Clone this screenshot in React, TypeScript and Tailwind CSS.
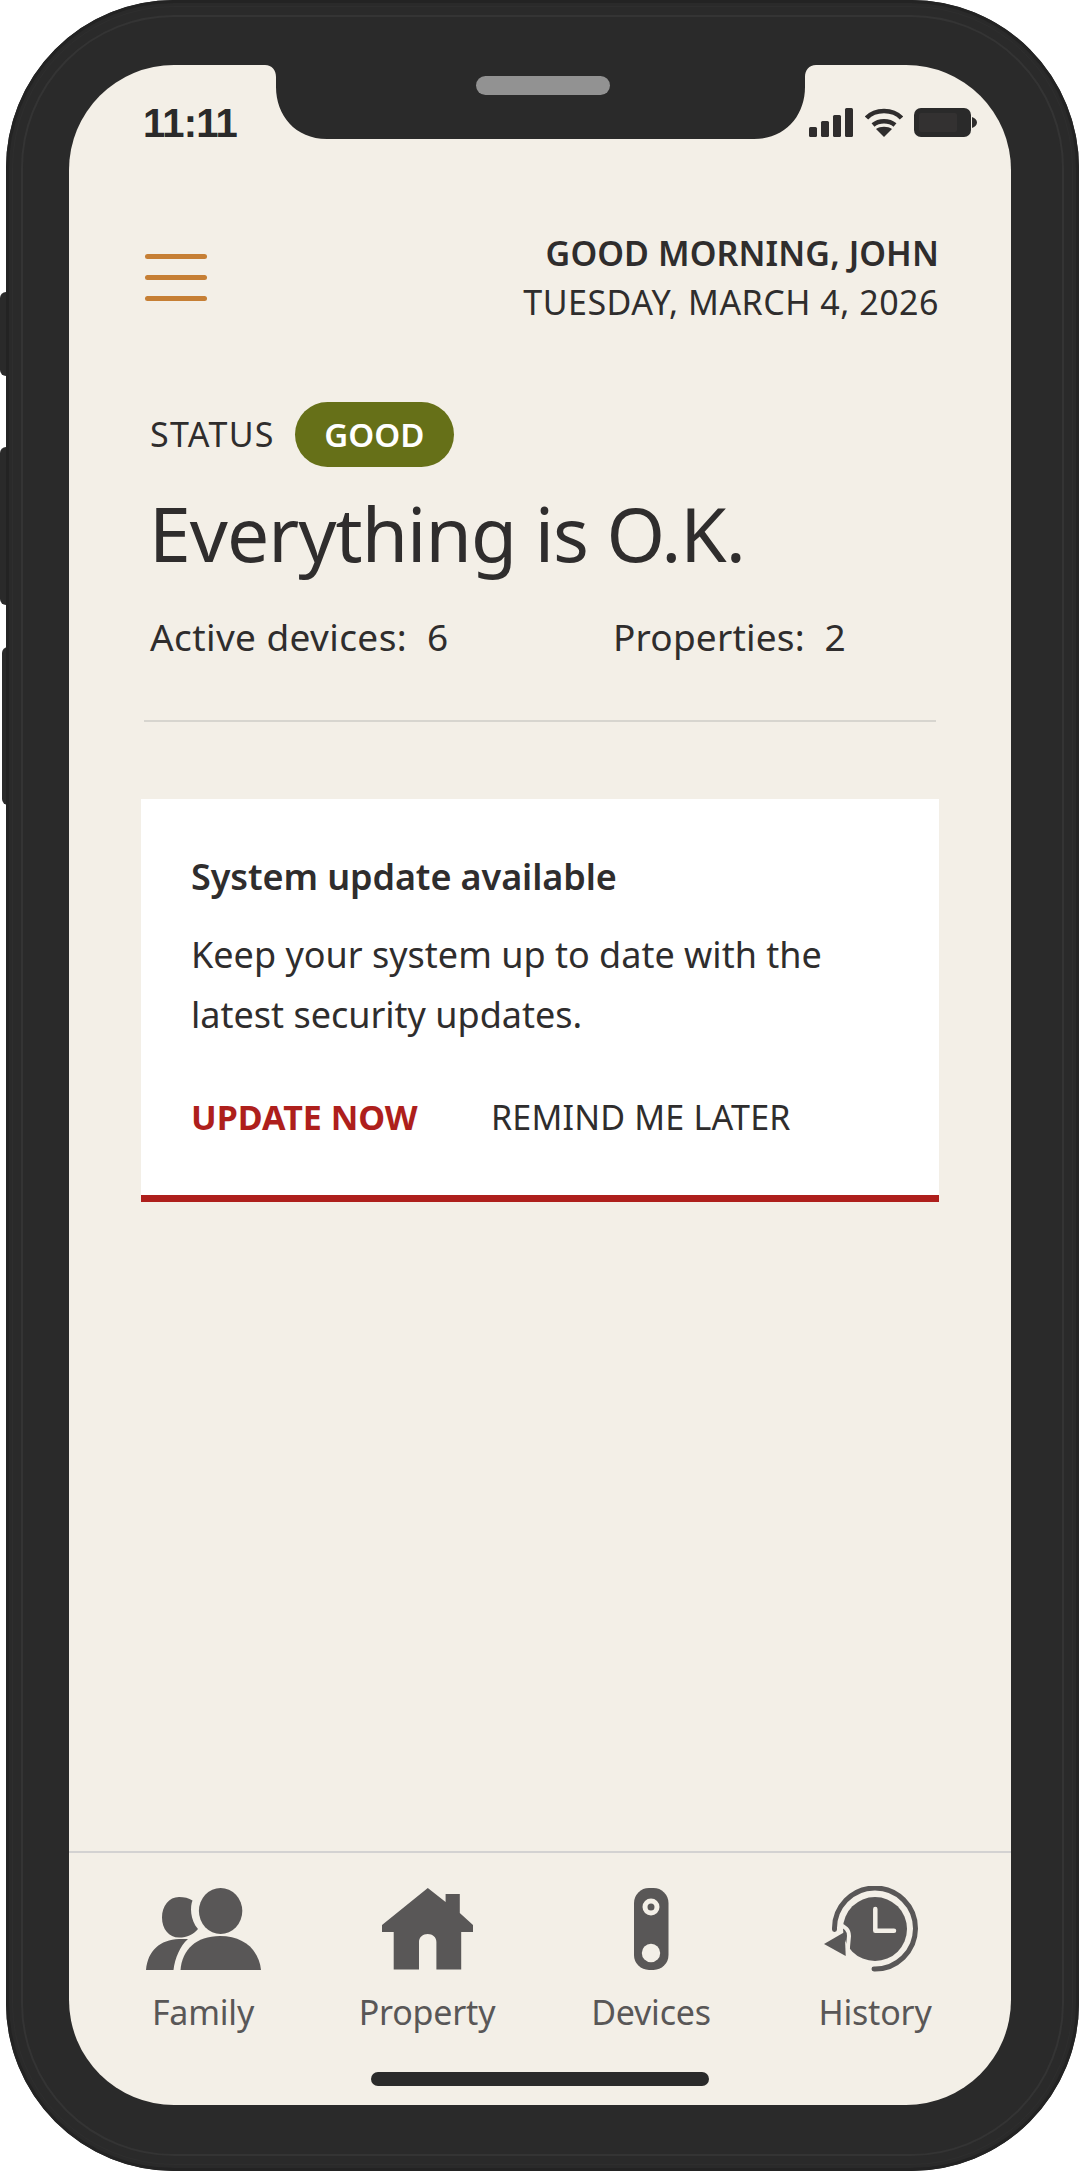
const font = "font-['Noto_Sans',sans-serif]";

function Family() {
  return (
    <svg width="115" height="82" viewBox="0 0 115 82" fill="#595757">
      <ellipse cx="74.600" cy="23" rx="21.700" ry="23" />
      <path d="M33 9C38 9 43 10 46.500 12.500C44 18 44 32 52 41C48 46 41 49.600 33 49.600C23 49.600 16 41 16 29.500C16 18 23 9 33 9Z" />
      <path d="M0 82C2 62 14 52 33 51H42C34 58 29 70 27.500 82Z" />
      <path d="M34.500 82C36 62 50 48 74 48C98 48 113 62 115 82Z" />
    </svg>
  );
}
function House() {
  return (
    <svg width="91" height="82" viewBox="0 0 91 82" fill="#595757">
      <path d="M45.800 0 63.600 14V6H77.800V25L91 37V44H79.200V81.500H54.400V54C54.400 49 50.500 46 45.700 46S37 49 37 54V81.500H11.700V44H0V37Z" />
    </svg>
  );
}
function Device() {
  return (
    <svg width="35" height="82" viewBox="0 0 35 82">
      <rect width="34.500" height="82" rx="15" fill="#595757" />
      <circle cx="17" cy="19" r="6" fill="none" stroke="#f3efe7" strokeWidth="5" />
      <circle cx="17" cy="65" r="9.200" fill="#f3efe7" />
    </svg>
  );
}
function HistoryIcon() {
  return (
    <svg width="108" height="86" viewBox="0 0 108 86" fill="none">
      <circle cx="54" cy="43" r="32" fill="#595757" />
      <path d="M53 83A40.500 40.500 0 1 0 13.500 43.500" stroke="#595757" strokeWidth="5" strokeLinecap="round" />
      <path d="M18 39C24 40 28 44 28 50L26 72" stroke="#f3efe7" strokeWidth="4" />
      <path d="M3 58 23.700 46 24.700 70Z" fill="#595757" />
      <path d="M54.300 23V44.700H73" stroke="#f3efe7" strokeWidth="4.500" strokeLinecap="round" strokeLinejoin="round" />
    </svg>
  );
}

function Tab({ icon, label }: { icon: React.ReactNode; label: string }) {
  return (
    <div className="flex w-[224px] flex-col items-center">
      <div className="flex h-[86px] items-center">{icon}</div>
      <span className="mt-[17px] text-[34px] leading-[46px] tracking-[-0.2px] text-[#595757]">{label}</span>
    </div>
  );
}

export default function App() {
  return (
    <div className={`relative h-[2171px] w-[1080px] overflow-hidden bg-white ${font}`}>
      <div className="absolute left-0 top-[292px] h-[84px] w-[12px] rounded-l-[6px] bg-[#2a2a2a]" />
      <div className="absolute left-0 top-[447px] h-[158px] w-[12px] rounded-l-[6px] bg-[#2a2a2a]" />
      <div className="absolute left-[2px] top-[647px] h-[158px] w-[12px] rounded-l-[6px] bg-[#2a2a2a]" />

      <div className="relative ml-[6px] h-[2171px] w-[1073px] rounded-[168px] bg-[#2a2a2a] pl-[63px] pr-[68px] pt-[65px]">
        <div className="pointer-events-none absolute inset-[15px] rounded-[153px] border-[2px] border-[#343434]" />
        <div className="pointer-events-none absolute inset-[6px] rounded-[162px] border border-[#2e2e2e]" />
        <div className="pointer-events-none absolute inset-0 rounded-[168px] border-[3px] border-[#232323]" />

        <div className="relative flex h-[2040px] flex-col overflow-hidden rounded-[105px] bg-[#f3efe7] text-[#2f2d2d]">
          <svg className="absolute left-[196px] top-0" width="551" height="74" viewBox="0 0 551 74" fill="#2a2a2a">
            <path d="M0 0H551C544 0 540 5 540 12V22C540 50 521 74 489 74H62C30 74 11 50 11 22V12C11 5 7 0 0 0Z" />
          </svg>
          <div className="absolute left-[407px] top-[11px] h-[19px] w-[134px] rounded-full bg-[#929292]" />

          <div className="flex h-[74px] shrink-0 items-end justify-between pl-[74px] pr-[34px]">
            <span className="font-['Liberation_Sans',sans-serif] text-[40px] font-bold leading-[32px] tracking-[-0.8px] text-[#2a2a2a]">11:11</span>
            <div className="flex items-center gap-[11.500px] pb-[2px]">
              <svg width="44" height="29" viewBox="0 0 44 29" fill="#2f2d2d">
                <rect x="0" y="19" width="8" height="10" rx="1.500" />
                <rect x="12" y="13" width="8" height="16" rx="1.500" />
                <rect x="24" y="7" width="8" height="22" rx="1.500" />
                <rect x="36" y="0" width="8" height="29" rx="1.500" />
              </svg>
              <svg width="38" height="29" viewBox="0 0 38 29" fill="none" stroke="#2f2d2d" strokeWidth="4.500">
                <path d="M1.500 10C10 .5 28 .5 36.500 10" />
                <path d="M8 17C14 12 24 12 30 17" />
                <path d="M19 29 11 21C15 18 23 18 27 21Z" fill="#2f2d2d" stroke="none" />
              </svg>
              <svg width="63" height="29" viewBox="0 0 63 29">
                <rect width="57" height="29" rx="7" fill="#2a2a2a" />
                <rect x="5" y="5" width="38" height="19" rx="2" fill="#333131" />
                <path d="M58 9C61 10 63 12 63 14.500S61 19 58 20Z" fill="#2f2d2d" />
              </svg>
            </div>
          </div>

          <div className="mt-[90px] flex items-start justify-between pl-[76px] pr-[72px]">
            <div className="mt-[25px] flex w-[62px] flex-col gap-[16px]">
              <div className="h-[5px] rounded-full bg-[#c67f35]" />
              <div className="h-[5px] rounded-full bg-[#c67f35]" />
              <div className="h-[5px] rounded-full bg-[#c67f35]" />
            </div>
            <div className="text-right">
              <div className="text-[34px] font-semibold leading-[49px] tracking-[0.1px]">GOOD MORNING, JOHN</div>
              <div className="text-[34px] leading-[49px] tracking-[0.5px]">TUESDAY, MARCH 4, 2026</div>
            </div>
          </div>

          <div className="mt-[75px] pl-[81px] pr-[75px]">
            <div className="flex items-center gap-[20px]">
              <span className="text-[34px] leading-[65px] tracking-[1.3px]">STATUS</span>
              <span className="flex h-[65px] w-[159px] items-center justify-center rounded-full bg-[#667018] text-[33px] font-semibold text-white">GOOD</span>
            </div>
            <h1 className="-ml-[1px] mt-[16px] text-[75px] font-normal leading-[100px] tracking-[-0.95px]">Everything is O.K.</h1>
            <div className="mt-[29px] flex text-[37px] leading-[50px] tracking-[0.4px]">
              <span className="w-[463px]">Active devices:&nbsp; 6</span>
              <span className="tracking-[0.2px]">Properties:&nbsp; 2</span>
            </div>
          </div>

          <div className="mx-[75px] mt-[58px] h-[2px] shrink-0 bg-[#d7d5cf]" />

          <div className="mx-[72px] mt-[77px] h-[403px] border-b-[7px] border-[#ae1f1c] bg-white pl-[50px] pt-[56px]">
            <div className="text-[36px] font-semibold leading-[44px] tracking-[-0.1px]">System update available</div>
            <div className="mt-[26px] text-[36px] leading-[60px]">Keep your system up to date with the<br />latest security updates.</div>
            <div className="mt-[47px] flex text-[34px] leading-[50px]">
              <span className="w-[300px] font-bold text-[#ae1f1c]">UPDATE NOW</span>
              <span className="tracking-[0.2px]">REMIND ME LATER</span>
            </div>
          </div>

          <div className="mt-auto border-t-[2px] border-[#d3d2d2]">
            <div className="flex pl-[22px] pt-[33px]">
              <Tab icon={<Family />} label="Family" />
              <Tab icon={<House />} label="Property" />
              <Tab icon={<Device />} label="Devices" />
              <Tab icon={<HistoryIcon />} label="History" />
            </div>
            <div className="mx-auto mb-[19px] mt-[37px] h-[14px] w-[338px] rounded-full bg-[#2a2a2a]" />
          </div>
        </div>
      </div>
    </div>
  );
}
